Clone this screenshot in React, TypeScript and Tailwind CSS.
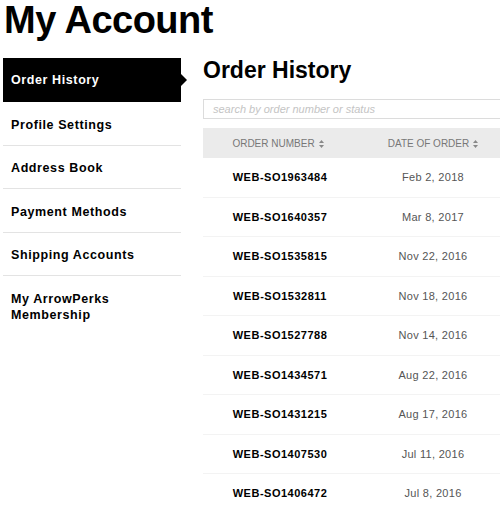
const navItems = [
  "Order History",
  "Profile Settings",
  "Address Book",
  "Payment Methods",
  "Shipping Accounts",
  "My ArrowPerks Membership",
];

const orders = [
  { id: "WEB-SO1963484", date: "Feb 2, 2018" },
  { id: "WEB-SO1640357", date: "Mar 8, 2017" },
  { id: "WEB-SO1535815", date: "Nov 22, 2016" },
  { id: "WEB-SO1532811", date: "Nov 18, 2016" },
  { id: "WEB-SO1527788", date: "Nov 14, 2016" },
  { id: "WEB-SO1434571", date: "Aug 22, 2016" },
  { id: "WEB-SO1431215", date: "Aug 17, 2016" },
  { id: "WEB-SO1407530", date: "Jul 11, 2016" },
  { id: "WEB-SO1406472", date: "Jul 8, 2016" },
];

function SortIcon() {
  return (
    <svg className="ml-[4px] inline-block w-[5px] h-[8px]" viewBox="0 0 5 8" fill="#888">
      <path d="M2.5 0L5 3H0z" />
      <path d="M2.5 8L0 5h5z" />
    </svg>
  );
}

export default function App() {
  return (
    <div className="w-[500px] h-[509px] overflow-hidden bg-white font-['Liberation_Sans',Arial,sans-serif] text-black">
      <h1 className="pl-[4px] text-[38px] leading-[40px] font-bold tracking-[-0.5px]">
        My Account
      </h1>

      <div className="flex mt-[18px]">
        {/* sidebar */}
        <nav className="ml-[3px] w-[178px] shrink-0">
          {navItems.map((item, i) =>
            i === 0 ? (
              <div
                key={item}
                className="relative h-[44px] bg-black text-white flex items-center px-[8px] text-[12.5px] font-bold tracking-[0.6px]"
              >
                {item}
                <span className="absolute -right-[6px] top-[16px] w-0 h-0 border-y-[6px] border-y-transparent border-l-[6px] border-l-black" />
              </div>
            ) : (
              <div
                key={item}
                className={`px-[8px] text-[12.5px] font-bold tracking-[0.6px] leading-[16px] ${
                  i < navItems.length - 1
                    ? "h-[43.5px] flex items-center pt-[3px] border-b border-[#e3e3e3]"
                    : "pt-[15px]"
                }`}
              >
                {item === "My ArrowPerks Membership" ? (
                  <>
                    My ArrowPerks
                    <br />
                    Membership
                  </>
                ) : (
                  item
                )}
              </div>
            )
          )}
        </nav>

        {/* main */}
        <main className="ml-[22px] w-[400px] shrink-0">
          <h2 className="mt-[1px] text-[23px] leading-[23px] font-bold">Order History</h2>

          <div className="mt-[17px] h-[20px] border border-[#dcdcdc] flex items-center pl-[9px]">
            <span className="italic text-[11px] text-[#c4c4c4]">
              search by order number or status
            </span>
          </div>

          <div className="mt-[9px]">
            <div className="grid grid-cols-[150px_160px_1fr] h-[30px] items-center bg-[#ebebeb] text-[10px] text-[#777]">
              <div className="text-center">
                ORDER NUMBER
                <SortIcon />
              </div>
              <div className="text-center">
                DATE OF ORDER
                <SortIcon />
              </div>
              <div />
            </div>
            {orders.map((o) => (
              <div
                key={o.id}
                className="grid grid-cols-[150px_160px_1fr] h-[39.5px] items-center border-b border-[#f3f3f3]"
              >
                <div className="text-center text-[11px] font-bold tracking-[0.5px] pl-[4px]">
                  {o.id}
                </div>
                <div className="text-center text-[11px] tracking-[0.3px] text-[#555]">
                  {o.date}
                </div>
                <div />
              </div>
            ))}
          </div>
        </main>
      </div>
    </div>
  );
}
